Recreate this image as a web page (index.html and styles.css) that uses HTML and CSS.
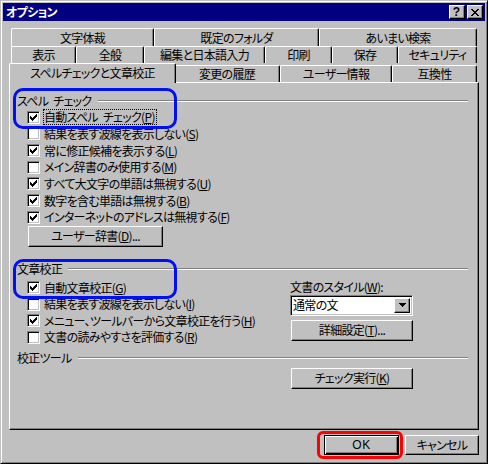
FILE: index.html
```html
<!DOCTYPE html>
<html lang="ja">
<head>
    <meta charset="UTF-8">
    <title>オプション</title>
    <link rel="stylesheet" href="styles.css">
</head>
<body>
<div class="window">
    <div class="titlebar">
        <span class="title">オプション</span>
        <span class="tbtn help">?</span>
        <span class="tbtn close">
            <svg width="8" height="7" viewBox="0 0 8 7"><path d="M0 0h2v1H0zM6 0h2v1H6zM1 1h2v1H1zM5 1h2v1H5zM2 2h4v1H2zM3 3h2v1H3zM2 4h4v1H2zM1 5h2v1H1zM5 5h2v1H5zM0 6h2v1H0zM6 6h2v1H6z"/></svg>
        </span>
    </div>

    <div class="tabs">
        <div class="tabrow row1">
            <div class="tab">文字体裁</div>
            <div class="tab">既定のフォルダ</div>
            <div class="tab">あいまい検索</div>
        </div>
        <div class="tabrow row2">
            <div class="tab">表示</div>
            <div class="tab">全般</div>
            <div class="tab">編集と日本語入力</div>
            <div class="tab">印刷</div>
            <div class="tab">保存</div>
            <div class="tab">セキュリティ</div>
        </div>
        <div class="tabrow row3">
            <div class="tab active">スペルチェックと文章校正</div>
            <div class="tab">変更の履歴</div>
            <div class="tab">ユーザー情報</div>
            <div class="tab">互換性</div>
        </div>
    </div>

    <div class="panel">
        <div class="group-title"><span>スペル チェック</span><i class="rule"></i></div>
        <div class="check"><span class="box"><svg width="9" height="9" viewBox="0 0 9 9"><path d="M1 3h1v3H1zM2 4h1v3H2zM3 5h1v3H3zM4 4h1v3H4zM5 3h1v3H5zM6 2h1v3H6zM7 1h1v3H7z"/></svg></span><span class="label focus">自動スペル チェック(<u>P</u>)</span></div>
        <div class="check"><span class="box"></span><span class="label">結果を表す波線を表示しない(<u>S</u>)</span></div>
        <div class="check"><span class="box"><svg width="9" height="9" viewBox="0 0 9 9"><path d="M1 3h1v3H1zM2 4h1v3H2zM3 5h1v3H3zM4 4h1v3H4zM5 3h1v3H5zM6 2h1v3H6zM7 1h1v3H7z"/></svg></span><span class="label">常に修正候補を表示する(<u>L</u>)</span></div>
        <div class="check"><span class="box"></span><span class="label">メイン辞書のみ使用する(<u>M</u>)</span></div>
        <div class="check"><span class="box"><svg width="9" height="9" viewBox="0 0 9 9"><path d="M1 3h1v3H1zM2 4h1v3H2zM3 5h1v3H3zM4 4h1v3H4zM5 3h1v3H5zM6 2h1v3H6zM7 1h1v3H7z"/></svg></span><span class="label">すべて大文字の単語は無視する(<u>U</u>)</span></div>
        <div class="check"><span class="box"><svg width="9" height="9" viewBox="0 0 9 9"><path d="M1 3h1v3H1zM2 4h1v3H2zM3 5h1v3H3zM4 4h1v3H4zM5 3h1v3H5zM6 2h1v3H6zM7 1h1v3H7z"/></svg></span><span class="label">数字を含む単語は無視する(<u>B</u>)</span></div>
        <div class="check"><span class="box"><svg width="9" height="9" viewBox="0 0 9 9"><path d="M1 3h1v3H1zM2 4h1v3H2zM3 5h1v3H3zM4 4h1v3H4zM5 3h1v3H5zM6 2h1v3H6zM7 1h1v3H7z"/></svg></span><span class="label">インターネットのアドレスは無視する(<u>F</u>)</span></div>
        <button class="btn dict">ユーザー辞書(<u>D</u>)...</button>

        <div class="group-title second"><span>文章校正</span><i class="rule"></i></div>
        <div class="grammar">
            <div class="grammar-checks">
                <div class="check"><span class="box"><svg width="9" height="9" viewBox="0 0 9 9"><path d="M1 3h1v3H1zM2 4h1v3H2zM3 5h1v3H3zM4 4h1v3H4zM5 3h1v3H5zM6 2h1v3H6zM7 1h1v3H7z"/></svg></span><span class="label">自動文章校正(<u>G</u>)</span></div>
                <div class="check"><span class="box"></span><span class="label">結果を表す波線を表示しない(<u>I</u>)</span></div>
                <div class="check"><span class="box"><svg width="9" height="9" viewBox="0 0 9 9"><path d="M1 3h1v3H1zM2 4h1v3H2zM3 5h1v3H3zM4 4h1v3H4zM5 3h1v3H5zM6 2h1v3H6zM7 1h1v3H7z"/></svg></span><span class="label">メニュー、ツールバーから文章校正を行う(<u>H</u>)</span></div>
                <div class="check"><span class="box"></span><span class="label">文書の読みやすさを評価する(<u>R</u>)</span></div>
            </div>
            <div class="style-col">
                <div class="style-label">文書のスタイル(<u>W</u>):</div>
                <div class="combo">
                    <span class="combo-text">通常の文</span>
                    <span class="combo-btn"><svg width="7" height="4" viewBox="0 0 7 4"><path d="M0 0h7v1H0zM1 1h5v1H1zM2 2h3v1H2zM3 3h1v1H3z"/></svg></span>
                </div>
                <button class="btn wide">詳細設定(<u>T</u>)...</button>
            </div>
        </div>

        <div class="group-title"><span>校正ツール</span><i class="rule"></i></div>
        <button class="btn wide run">チェック実行(<u>K</u>)</button>
    </div>

    <div class="footer">
        <button class="btn default">OK</button>
        <button class="btn">キャンセル</button>
    </div>

    <div class="mark mark-spell"></div>
    <div class="mark mark-grammar"></div>
    <div class="mark mark-ok"></div>
</div>
</body>
</html>
```

FILE: styles.css
```css
* {
    box-sizing: border-box;
    margin: 0;
    padding: 0;
}

body {
    background-color: #c0c0c0;
    color: #000;
    font-family: "Noto Sans CJK JP", sans-serif;
    font-size: 12px;
    line-height: 14px;
    letter-spacing: -0.7px;
    word-spacing: 3px;
    font-feature-settings: "palt";
}

u {
    text-decoration: underline;
    text-underline-offset: 1px;
}

.window {
    position: relative;
    width: 488px;
    height: 464px;
    background-color: #c0c0c0;
    border: 1px solid;
    border-color: #c0c0c0 #000 #000 #c0c0c0;
    box-shadow: inset 1px 1px #fff, inset -1px -1px #808080;
    padding: 2px;
    display: flex;
    flex-direction: column;
}

/* title bar */
.titlebar {
    height: 18px;
    background-color: #000080;
    display: flex;
    align-items: center;
    padding: 0 2px;
    gap: 2px;
}

.title {
    color: #fff;
    font-weight: bold;
    margin-right: auto;
    padding-left: 1px;
}

.tbtn {
    width: 16px;
    height: 14px;
    background-color: #c0c0c0;
    border: 1px solid;
    border-color: #fff #000 #000 #fff;
    box-shadow: inset -1px -1px #808080;
    display: flex;
    align-items: center;
    justify-content: center;
}

.help {
    font-family: "Liberation Sans", sans-serif;
    font-weight: bold;
    font-size: 12px;
    line-height: 12px;
    letter-spacing: 0;
    padding-right: 1px;
}

/* tabs */
.tabs {
    margin: 7px 0 0 8px;
    width: 466px;
}

.tabrow {
    display: grid;
}

.row1 {
    height: 18px;
    grid-template-columns: 143px 165px 158px;
}

.row2 {
    height: 17px;
    grid-template-columns: 65px 68px 121px 67px 66px 79px;
}

.row3 {
    height: 19px;
    grid-template-columns: 163px 106px 112px 85px;
}

.tab {
    display: flex;
    align-items: center;
    justify-content: center;
    background-color: #c0c0c0;
    border-top: 1px solid #fff;
    border-left: 1px solid #fff;
    border-right: 1px solid #000;
    border-radius: 2px 2px 0 0;
    box-shadow: inset -1px 0 #808080;
    white-space: nowrap;
}

.row3 .tab {
    margin-top: 2px;
}

.row3 .tab.active {
    position: relative;
    z-index: 1;
    margin: 0 -2px -1px;
    padding-bottom: 1px;
}

/* page */
.panel {
    margin-left: 6px;
    width: 470px;
    height: 348px;
    border: 1px solid;
    border-color: #fff #000 #000 #fff;
    box-shadow: inset -1px -1px #808080;
    padding: 10px 10px 0 7px;
}

.group-title {
    display: flex;
    align-items: center;
    gap: 6px;
    height: 16px;
    white-space: nowrap;
}

.group-title.second {
    margin-top: 14px;
}

.rule {
    flex: 1;
    height: 2px;
    border-top: 1px solid #808080;
    border-bottom: 1px solid #fff;
}

.check {
    display: flex;
    align-items: center;
    height: 16.67px;
    padding-left: 10px;
    white-space: nowrap;
}

.box {
    width: 13px;
    height: 13px;
    flex: none;
    background-color: #fff;
    border: 1px solid;
    border-color: #808080 #fff #fff #808080;
    box-shadow: inset 1px 1px #000, inset -1px -1px #c0c0c0;
    padding: 1px;
    display: flex;
}

.box svg {
    display: block;
}

.label {
    margin-left: 3px;
    border: 1px dotted transparent;
    line-height: 14px;
}

.label.focus {
    border-color: #000;
    padding-right: 1px;
}

.btn {
    display: flex;
    align-items: center;
    justify-content: center;
    height: 21px;
    background-color: #c0c0c0;
    border: 1px solid;
    border-color: #fff #000 #000 #fff;
    box-shadow: inset -1px -1px #808080;
    font: inherit;
    letter-spacing: inherit;
    word-spacing: inherit;
    color: #000;
    white-space: nowrap;
}

.dict {
    margin-left: 11px;
    width: 135px;
}

.grammar {
    display: grid;
    grid-template-columns: 273px 123px;
    margin-top: 3px;
    height: 70px;
}

.grammar .check {
    height: 16.5px;
}

.style-col {
    display: flex;
    flex-direction: column;
}

.style-label {
    height: 15px;
    white-space: nowrap;
}

.combo {
    display: flex;
    align-items: center;
    height: 21px;
    background-color: #fff;
    border: 1px solid;
    border-color: #808080 #fff #fff #808080;
    box-shadow: inset 1px 1px #000, inset -1px -1px #c0c0c0;
    padding: 2px;
}

.combo-text {
    flex: 1;
}

.combo-btn {
    width: 16px;
    height: 15px;
    background-color: #c0c0c0;
    border: 1px solid;
    border-color: #fff #000 #000 #fff;
    box-shadow: inset -1px -1px #808080;
    display: flex;
    align-items: center;
    justify-content: center;
}

.combo-btn svg {
    display: block;
}

.wide {
    margin-left: 1px;
    width: 122px;
}

.style-col .wide {
    margin-top: 4px;
}

.run {
    margin-top: 2px;
    margin-left: 274px;
}

.footer {
    display: flex;
    justify-content: flex-end;
    gap: 6px;
    margin-top: 5px;
    padding-right: 6px;
}

.footer .btn {
    width: 74px;
    height: 20px;
}

.footer .btn.default {
    width: 75px;
    font-family: "Liberation Sans", sans-serif;
    letter-spacing: 0.5px;
    border-color: #000;
    box-shadow: inset 1px 1px #fff, inset -1px -1px #000, inset -2px -2px #808080;
}

/* highlight marks drawn over the dialog */
.mark {
    position: absolute;
    border: 3px solid #0010f0;
    border-radius: 10px;
}

.mark-spell {
    left: 12px;
    top: 87px;
    width: 164px;
    height: 41px;
}

.mark-grammar {
    left: 12px;
    top: 258px;
    width: 164px;
    height: 40px;
}

.mark-ok {
    left: 316px;
    top: 430px;
    width: 86px;
    height: 28px;
    border-color: #ff0000;
    border-radius: 6px;
}
```
